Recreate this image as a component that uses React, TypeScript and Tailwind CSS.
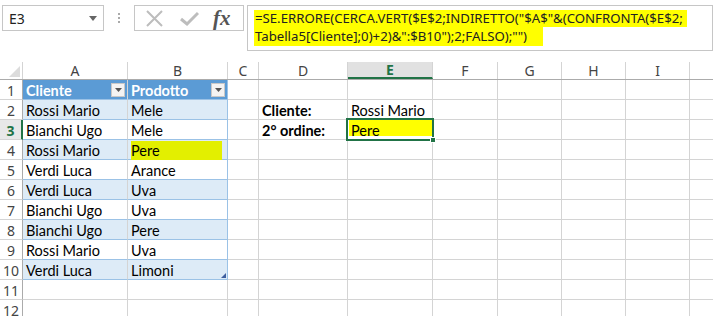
import React from "react";

const cols = [
  { n: "A", w: 105 },
  { n: "B", w: 100 },
  { n: "C", w: 31 },
  { n: "D", w: 89 },
  { n: "E", w: 85 },
  { n: "F", w: 65 },
  { n: "G", w: 64 },
  { n: "H", w: 64 },
  { n: "I", w: 64 },
  { n: "", w: 40 },
];

const data: Record<number, string[]> = {
  2: ["Rossi Mario", "Mele"],
  3: ["Bianchi Ugo", "Mele"],
  4: ["Rossi Mario", "Pere"],
  5: ["Verdi Luca", "Arance"],
  6: ["Verdi Luca", "Uva"],
  7: ["Bianchi Ugo", "Uva"],
  8: ["Bianchi Ugo", "Pere"],
  9: ["Rossi Mario", "Uva"],
  10: ["Verdi Luca", "Limoni"],
};

const cellFont = { fontFamily: "Lato, 'Liberation Sans', sans-serif" };

function FilterBtn() {
  return (
    <div className="absolute right-[2px] top-[3px] w-[14px] h-[14px] bg-[#f3f3f3] border border-[#c8c8c8] flex items-center justify-center">
      <svg width="7" height="4" viewBox="0 0 7 4">
        <path d="M0 0 L7 0 L3.5 4 Z" fill="#555" />
      </svg>
    </div>
  );
}

function Cell({ r, c }: { r: number; c: number }) {
  const w = cols[c].w;
  const inTable = r >= 1 && r <= 10 && c <= 1;
  let text = "";
  let bold = false;
  if (r >= 2 && r <= 10 && c <= 1) text = data[r][c];
  if (r === 1 && c === 0) text = "Cliente";
  if (r === 1 && c === 1) text = "Prodotto";
  if (r === 2 && c === 3) { text = "Cliente:"; bold = true; }
  if (r === 3 && c === 3) { text = "2° ordine:"; bold = true; }
  if (r === 2 && c === 4) text = "Rossi Mario";
  if (r === 3 && c === 4) text = "Pere";

  let bg = "bg-white";
  if (inTable) {
    if (r === 1) bg = "bg-[#5b9bd5]";
    else if (r % 2 === 0) bg = "bg-[#ddebf7]";
  }
  const bottom = inTable ? "border-b-[#9bc2e6]" : "border-b-[#d4d4d4]";
  const right = inTable && c === 1 ? "border-r-[#9bc2e6]" : "border-r-[#d4d4d4]";

  return (
    <div
      className={`relative h-[20px] shrink-0 border-r border-b ${bottom} ${right} ${bg}`}
      style={{ width: w }}
    >
      {r === 4 && c === 1 && (
        <div className="absolute left-[3px] top-[1px] w-[91px] h-[19px] bg-[#e3ef00]" />
      )}
      {r === 3 && c === 4 && (
        <div className="absolute left-[1px] top-[0px] w-[83px] h-[16px] bg-[#ffff00]" />
      )}
      {text && (
        <div
          className={`absolute left-[3px] bottom-[-1px] leading-[18px] text-[14.5px] whitespace-nowrap ${
            r === 1 && inTable ? "text-white font-bold" : "text-black"
          } ${bold ? "font-bold" : ""}`}
          style={cellFont}
        >
          {text}
        </div>
      )}
      {r === 1 && inTable && <FilterBtn />}
      {r === 10 && c === 1 && (
        <svg className="absolute right-[1px] bottom-[1px]" width="5" height="5" viewBox="0 0 5 5">
          <path d="M5 0 L5 5 L0 5 Z" fill="#3f5f9f" />
        </svg>
      )}
      {r === 3 && c === 4 && (
        <>
          <div className="absolute left-[-2px] top-[-2px] right-[-2px] bottom-[-2px] border-2 border-[#217346] z-10" />
          <div className="absolute right-[-4px] bottom-[-4px] w-[6px] h-[6px] bg-[#217346] border border-white z-20" />
        </>
      )}
    </div>
  );
}

export default function App() {
  const headerFont = { fontFamily: "'Noto Sans', 'Open Sans', sans-serif" };
  const rows = Array.from({ length: 12 }, (_, i) => i + 1);
  return (
    <div className="w-[713px] h-[316px] overflow-hidden bg-white relative">
      {/* formula bar */}
      <div className="flex items-start h-[62px]">
        <div
          className="ml-[2px] mt-[5px] w-[102px] h-[26px] border border-[#c6c6c6] flex items-center justify-between pl-[6px] pr-[6px] text-[14px] text-[#222]"
          style={headerFont}
        >
          <span>E3</span>
          <svg width="8" height="5" viewBox="0 0 8 5">
            <path d="M0 0 L8 0 L4 5 Z" fill="#666" />
          </svg>
        </div>
        <div className="w-[30px] h-[36px] flex flex-col items-center justify-start pt-[13px] gap-[2px]">
          <div className="w-[2px] h-[2px] bg-[#aaa]" />
          <div className="w-[2px] h-[2px] bg-[#aaa]" />
          <div className="w-[2px] h-[2px] bg-[#aaa]" />
        </div>
        <div className="mt-[5px] w-[110px] h-[26px] border border-[#c6c6c6] flex items-center">
          <svg className="ml-[11px]" width="17" height="17" viewBox="0 0 17 17">
            <path d="M1 1 L16 16 M16 1 L1 16" stroke="#bdbdbd" strokeWidth="2" />
          </svg>
          <svg className="ml-[17px]" width="19" height="15" viewBox="0 0 19 15">
            <path d="M1 8 L7 13 L18 2" stroke="#bdbdbd" strokeWidth="3" fill="none" />
          </svg>
          <span
            className="ml-[14px] text-[21px] italic font-bold text-[#555] leading-none"
            style={{ fontFamily: "'Liberation Serif', serif" }}
          >
            fx
          </span>
        </div>
        <div
          className="ml-[3px] mt-[5px] flex-1 h-[46px] border border-[#c6c6c6] pl-[6px] pt-[4px] text-[13.2px] text-[#222] leading-[17px] whitespace-nowrap overflow-hidden"
          style={headerFont}
        >
          <div className="h-[17px]">
            <span className="inline-block bg-[#ffff00] pr-[4px] pl-[1px]">=SE.ERRORE(CERCA.VERT($E$2;INDIRETTO("$A$"&amp;(CONFRONTA($E$2;</span>
          </div>
          <div className="h-[19px]">
            <span className="inline-block bg-[#ffff00] pr-[16px] pl-[1px] leading-[19px]">Tabella5[Cliente];0)+2)&amp;":$B10");2;FALSO);"")</span>
          </div>
        </div>
      </div>

      {/* grid */}
      <div className="flex flex-col">
        <div className="flex h-[18px] border-b border-[#ababab]">
          <div className="relative w-[23px] shrink-0 border-r border-[#d4d4d4]">
            <svg className="absolute right-[2px] bottom-[2px]" width="11" height="11" viewBox="0 0 11 11">
              <path d="M11 0 L11 11 L0 11 Z" fill="#dcdcdc" />
            </svg>
          </div>
          {cols.map((c) => (
            <div
              key={c.n || "j"}
              className={`shrink-0 flex items-center justify-center text-[14px] border-r border-[#d4d4d4] ${
                c.n === "E" ? "bg-[#e1e1e1] text-[#217346] font-bold border-b-2 border-b-[#217346]" : "text-[#444]"
              }`}
              style={{ width: c.w, ...headerFont }}
            >
              {c.n}
            </div>
          ))}
        </div>
        {rows.map((r) => (
          <div key={r} className="flex">
            <div
              className={`w-[23px] h-[20px] shrink-0 flex items-center justify-center pt-[2px] text-[14px] border-b border-b-[#d4d4d4] ${
                r === 3
                  ? "bg-[#e8e8e8] text-[#217346] font-bold border-r-2 border-r-[#217346]"
                  : "text-[#444] border-r border-r-[#ababab]"
              }`}
              style={headerFont}
            >
              {r}
            </div>
            {cols.map((_, c) => (
              <Cell key={c} r={r} c={c} />
            ))}
          </div>
        ))}
      </div>
    </div>
  );
}
